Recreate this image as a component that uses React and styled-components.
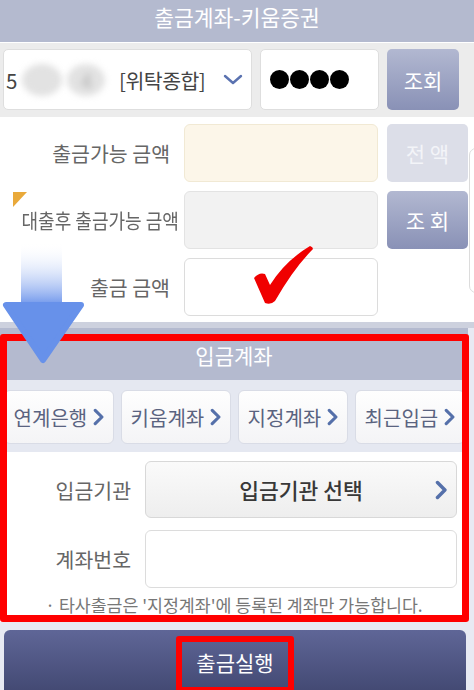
import styled, { createGlobalStyle } from "styled-components";

const GlobalStyle = createGlobalStyle`
  html, body {
    margin: 0;
    padding: 0;
    background: #e8eaf3;
  }
  * { box-sizing: border-box; }
`;

const FONT = `"Noto Sans CJK KR", "Noto Sans", sans-serif`;

const ChevronDown = () => (
  <svg width="20" height="11" viewBox="0 0 20 11">
    <polyline points="2,2 10,9 18,2" fill="none" stroke="#5a72b0" strokeWidth="2.4" strokeLinecap="round" strokeLinejoin="round" />
  </svg>
);

const ChevronRight = ({ size = 16 }) => (
  <svg width={size * 0.62} height={size} viewBox="0 0 10 16">
    <polyline points="2,2 8,8 2,14" fill="none" stroke="#5570aa" strokeWidth="2.8" strokeLinecap="round" strokeLinejoin="round" />
  </svg>
);

const Login = () => {
  const tabs = ["연계은행", "키움계좌", "지정계좌", "최근입금"];

  return (
    <Page>
      <GlobalStyle />
      <TitleBar>출금계좌-키움증권</TitleBar>

      <AccountBar>
        <AccountSelect>
          <AccNo>
            5<Blur $w={40} /><Blur $w={38}>4</Blur>
          </AccNo>
          <AccType>[위탁종합]</AccType>
          <ChevronDown />
        </AccountSelect>
        <PinBox>
          <Dot /><Dot /><Dot /><Dot />
        </PinBox>
        <ActionButton>조회</ActionButton>
      </AccountBar>

      <AmountSection>
        <AmountRows>
          <FieldRow>
            <Label>출금가능 금액</Label>
            <AmountBox $tone="cream" />
            <SideButton $muted>전 액</SideButton>
          </FieldRow>
          <FieldRow>
            <Label>
              <Corner />
              <Squeezed>대출후 출금가능 금액</Squeezed>
            </Label>
            <AmountBox $tone="gray" />
            <SideButton>조 회</SideButton>
          </FieldRow>
          <FieldRow>
            <Label>출금 금액</Label>
            <AmountBox />
            <Spacer />
          </FieldRow>
        </AmountRows>
        <SidePanel />
      </AmountSection>

      <Deposit>
        <SectionHeader>입금계좌</SectionHeader>
        <TabStrip>
          {tabs.map((t) => (
            <Tab key={t}>
              {t}
              <ChevronRight size={18} />
            </Tab>
          ))}
        </TabStrip>
        <DepositBody>
          <BodyRow>
            <BodyLabel>입금기관</BodyLabel>
            <BankSelect>
              <span />
              <BankText>입금기관 선택</BankText>
              <ChevronRight size={20} />
            </BankSelect>
          </BodyRow>
          <BodyRow>
            <BodyLabel>계좌번호</BodyLabel>
            <AccountInput />
          </BodyRow>
          <Note>· 타사출금은 '지정계좌'에 등록된 계좌만 가능합니다.</Note>
        </DepositBody>
        <RedFrame />
      </Deposit>

      <SubmitBar>
        <SubmitButton>
          <Marked>출금실행</Marked>
        </SubmitButton>
      </SubmitBar>

      <FlowArrow width="84" height="122" viewBox="0 0 84 122">
        <defs>
          <linearGradient id="shaft" x1="0" y1="0" x2="0" y2="1">
            <stop offset="0" stopColor="#ffffff" stopOpacity="0" />
            <stop offset="1" stopColor="#7399ec" />
          </linearGradient>
        </defs>
        <rect x="19" y="0" width="41" height="62" fill="url(#shaft)" />
        <path d="M4 63 L79 63 L41 118 Z" fill="#6791ea" stroke="#6791ea" strokeWidth="6" strokeLinejoin="round" />
      </FlowArrow>

      <CheckMark width="62" height="60" viewBox="0 0 62 60">
        <path d="M1 32 Q6 26 12 28 L17 39 Q32 15 57 0 Q60 1 60 3 Q41 22 22 55 Q18 59 12 57 Z" fill="#f00000" />
      </CheckMark>
    </Page>
  );
};

const Page = styled.div`
  position: relative;
  width: 474px;
  height: 690px;
  overflow: hidden;
  background: #e8eaf3;
  font-family: ${FONT};
`;

const TitleBar = styled.div`
  height: 43px;
  padding-bottom: 8px;
  line-height: 34px;
  text-align: center;
  color: #ffffff;
  font-size: 21.5px;
  background: #b4bacf;
  border-bottom: 1px solid #ffffff;
`;

const AccountBar = styled.div`
  display: flex;
  align-items: center;
  gap: 8px;
  height: 74px;
  padding: 6px 15px 7px 3px;
  background: #ececec;
`;

const AccountSelect = styled.div`
  display: flex;
  align-items: center;
  width: 250px;
  height: 61px;
  padding: 0 8px 0 2px;
  background: #ffffff;
  border: 1px solid #dedede;
  border-radius: 5px;
  font-size: 20.5px;
  color: #444;
`;

const AccNo = styled.span`
  display: flex;
  align-items: center;
  gap: 5px;
  width: 113px;
`;

const Blur = styled.span`
  display: inline-flex;
  align-items: center;
  justify-content: center;
  width: ${(p) => p.$w}px;
  height: 32px;
  border-radius: 50%;
  background: #e2e2e2;
  color: rgba(80, 80, 80, 0.3);
  filter: blur(3px);
`;

const AccType = styled.span`
  flex: 1;
  color: #444;
  letter-spacing: -0.5px;
`;

const PinBox = styled.div`
  display: flex;
  align-items: center;
  gap: 1px;
  width: 119px;
  height: 61px;
  padding-left: 9px;
  background: #ffffff;
  border: 1px solid #dedede;
  border-radius: 5px;
`;

const Dot = styled.span`
  width: 19px;
  height: 19px;
  border-radius: 50%;
  background: #000;
`;

const ActionButton = styled.div`
  display: flex;
  align-items: center;
  justify-content: center;
  width: 72px;
  height: 61px;
  border-radius: 5px;
  color: #ffffff;
  font-size: 21px;
  background: linear-gradient(#b2b8d1, #8991b6);
`;

const AmountSection = styled.div`
  display: flex;
  background: #ffffff;
  padding: 7px 0 6px;
  border-bottom: 6px solid #cdd1de;
`;

const AmountRows = styled.div`
  display: flex;
  flex-direction: column;
  gap: 9px;
  width: 469px;
  flex-shrink: 0;
`;

const FieldRow = styled.div`
  display: grid;
  grid-template-columns: 170px 194px 76px;
  column-gap: 14px;
  align-items: center;
  height: 58px;
  & > :last-child {
    margin-left: -5px;
  }
`;

const Label = styled.div`
  position: relative;
  text-align: right;
  white-space: nowrap;
  font-size: 20.5px;
  color: #666;
`;

const Squeezed = styled.span`
  display: inline-block;
  transform: scaleX(0.88);
  transform-origin: right center;
`;

const Corner = styled.span`
  position: absolute;
  left: 13px;
  top: -13px;
  width: 0;
  height: 0;
  border-top: 15px solid #e9a93a;
  border-right: 14px solid transparent;
`;

const toneBg = { cream: "#fcf6e9", gray: "#f2f2f2", white: "#ffffff" };
const toneBorder = { cream: "#f1e9d4", gray: "#e3e3e3", white: "#dcdcdc" };

const AmountBox = styled.div`
  height: 58px;
  border-radius: 6px;
  background: ${(p) => toneBg[p.$tone || "white"]};
  border: 1px solid ${(p) => toneBorder[p.$tone || "white"]};
`;

const SideButton = styled.div`
  display: flex;
  align-items: center;
  justify-content: center;
  height: 58px;
  border-radius: 5px;
  font-size: 21px;
  color: ${(p) => (p.$muted ? "#f3f4f8" : "#ffffff")};
  background: ${(p) => (p.$muted ? "#dcdee8" : "linear-gradient(#b2b8d1, #8991b6)")};
`;

const Spacer = styled.div``;

const SidePanel = styled.div`
  width: 40px;
  height: 145px;
  margin-top: 24px;
  border: 1px solid #dcdcdc;
  border-radius: 7px;
  background: #ffffff;
  flex-shrink: 0;
`;

const Deposit = styled.div`
  position: relative;
  width: 468px;
`;

const SectionHeader = styled.div`
  height: 52px;
  line-height: 54px;
  text-align: center;
  color: #ffffff;
  font-size: 21px;
  background: #b4bacf;
`;

const TabStrip = styled.div`
  display: flex;
  gap: 7px;
  height: 72px;
  padding: 10px 0 8px 4px;
  background: #e5e8f1;
`;

const Tab = styled.div`
  display: flex;
  align-items: center;
  justify-content: center;
  gap: 6px;
  width: 110px;
  flex-shrink: 0;
  height: 54px;
  border-radius: 6px;
  border: 1px solid #d9dce6;
  background: linear-gradient(#fefefe, #f4f4f6);
  font-size: 20px;
  color: #5a6380;
  white-space: nowrap;
`;

const DepositBody = styled.div`
  display: flex;
  flex-direction: column;
  gap: 12px;
  height: 170px;
  padding-top: 9px;
  background: #ffffff;
`;

const BodyRow = styled.div`
  display: grid;
  grid-template-columns: 131px 312px;
  column-gap: 14px;
  align-items: center;
`;

const BodyLabel = styled.div`
  text-align: right;
  font-size: 20.5px;
  color: #666;
`;

const BankSelect = styled.div`
  display: grid;
  grid-template-columns: 30px 1fr 30px;
  align-items: center;
  justify-items: center;
  height: 57px;
  border-radius: 6px;
  border: 1px solid #d8d8d8;
  background: linear-gradient(#fafafa, #eeeeee);
`;

const BankText = styled.span`
  font-size: 21.5px;
  font-weight: 500;
  color: #383838;
`;

const AccountInput = styled.div`
  height: 58px;
  border-radius: 6px;
  border: 1px solid #dcdcdc;
  background: #ffffff;
`;

const Note = styled.div`
  margin-top: -6px;
  text-align: center;
  font-size: 17.3px;
  line-height: 22px;
  color: #777;
  white-space: nowrap;
`;

const RedFrame = styled.div`
  position: absolute;
  top: 6px;
  left: 0;
  width: 469px;
  bottom: 0;
  border: 7px solid #ff0000;
  border-radius: 3px;
  pointer-events: none;
`;

const SubmitBar = styled.div`
  padding: 8px 8px 0 4px;
`;

const SubmitButton = styled.div`
  display: flex;
  justify-content: center;
  align-items: flex-start;
  height: 70px;
  padding-top: 6px;
  border-radius: 6px;
  background: linear-gradient(#5f6697, #3f456e);
`;

const Marked = styled.span`
  display: inline-block;
  padding: 5px 14px 10px;
  border: 6px solid #ff0000;
  border-radius: 3px;
  line-height: 30px;
  font-size: 21px;
  color: #ffffff;
`;

const FlowArrow = styled.svg`
  position: absolute;
  left: 2px;
  top: 242px;
`;

const CheckMark = styled.svg`
  position: absolute;
  left: 253px;
  top: 246px;
`;

export default Login;
